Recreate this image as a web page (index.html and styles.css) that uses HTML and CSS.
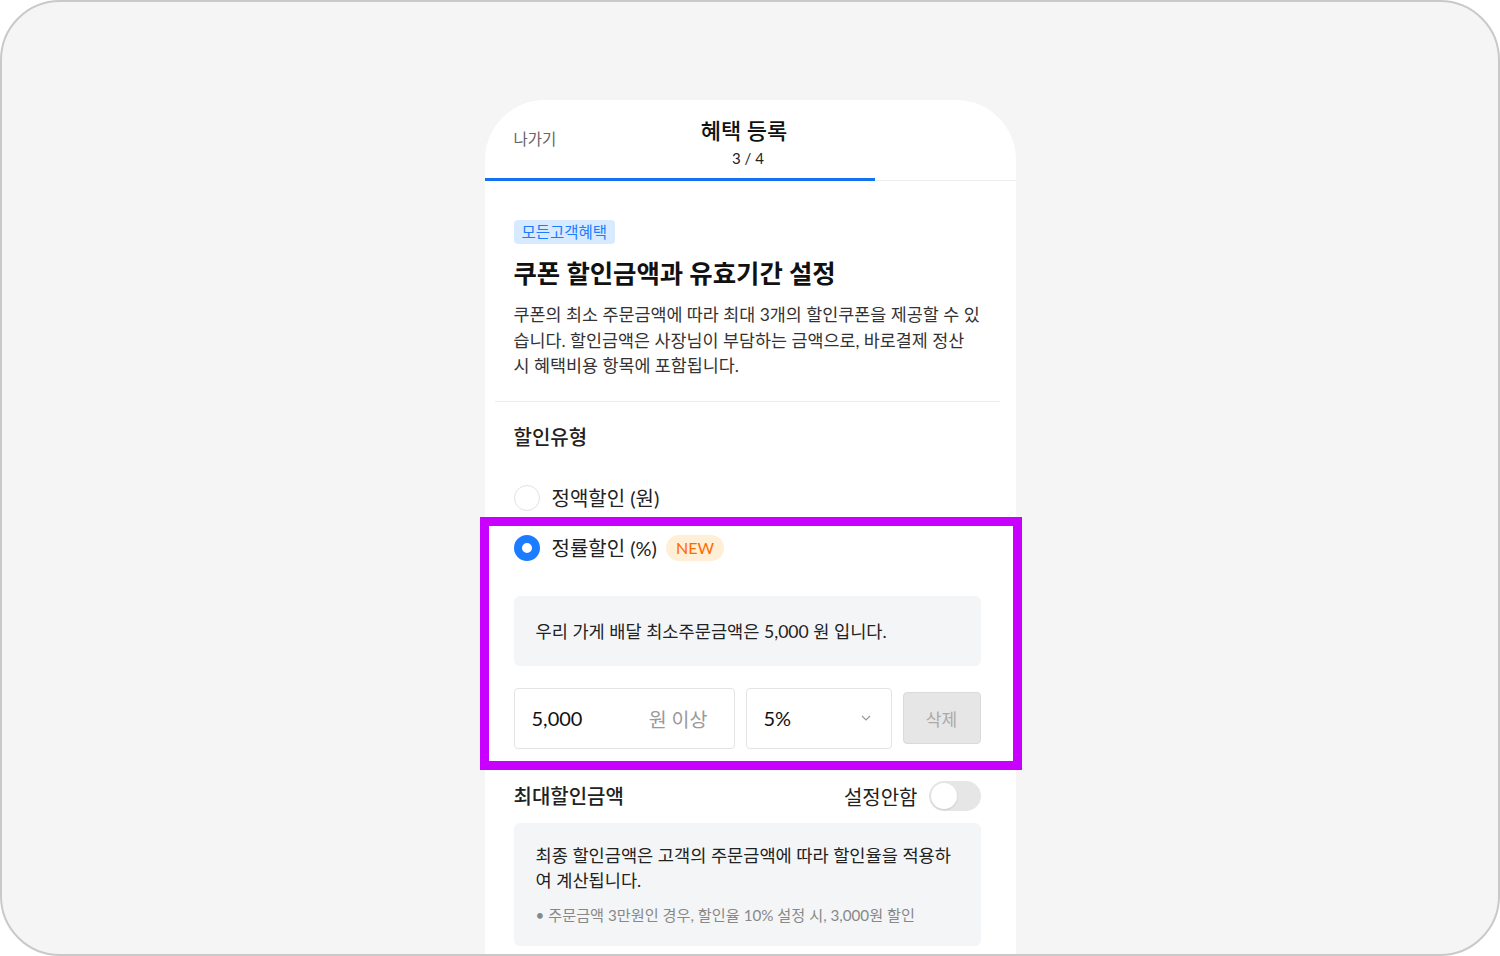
FILE: index.html
```html
<!DOCTYPE html>
<html lang="ko">
<head>
    <meta charset="utf-8">
    <title>혜택 등록</title>
    <link rel="stylesheet" href="styles.css">
</head>
<body>
    <div class="frame">
        <div class="phone">
            <div class="header">
                <div class="back">나가기</div>
                <div class="title-block">
                    <div class="title">혜택 등록</div>
                    <div class="step">3 / 4</div>
                </div>
                <div></div>
            </div>
            <div class="progress"><div class="progress-fill"></div></div>

            <div class="content">
                <span class="badge">모든고객혜택</span>
                <h1>쿠폰 할인금액과 유효기간 설정</h1>
                <p class="desc">쿠폰의 최소 주문금액에 따라 최대 3개의 할인쿠폰을 제공할 수 있<br>습니다. 할인금액은 사장님이 부담하는 금액으로, 바로결제 정산<br>시 혜택비용 항목에 포함됩니다.</p>

                <div class="divider"></div>

                <h2 class="section-title">할인유형</h2>

                <div class="radio-row first">
                    <span class="radio"></span>
                    <span class="radio-label">정액할인 (원)</span>
                </div>
                <div class="radio-row">
                    <span class="radio checked"></span>
                    <span class="radio-label">정률할인 (%)</span>
                    <span class="new">NEW</span>
                </div>

                <div class="info-box single">우리 가게 배달 최소주문금액은 5,000 원 입니다.</div>

                <div class="input-row">
                    <div class="field amount">
                        <span class="value">5,000</span>
                        <span class="unit">원 이상</span>
                    </div>
                    <div class="field select">
                        <span class="value">5%</span>
                        <svg width="10" height="6" viewBox="0 0 10 6"><path d="M1 1l4 4 4-4" fill="none" stroke="#999" stroke-width="1.2"/></svg>
                    </div>
                    <button class="btn-delete">삭제</button>
                </div>

                <div class="max-row">
                    <h2 class="section-title">최대할인금액</h2>
                    <div class="toggle-wrap">
                        <span class="toggle-label">설정안함</span>
                        <span class="toggle"><span class="knob"></span></span>
                    </div>
                </div>

                <div class="info-box multi">
                    <p>최종 할인금액은 고객의 주문금액에 따라 할인율을 적용하<br>여 계산됩니다.</p>
                    <p class="note">• 주문금액 3만원인 경우, 할인율 10% 설정 시, 3,000원 할인</p>
                </div>
            </div>
        </div>

        <div class="highlight"></div>
    </div>
</body>
</html>
```

FILE: styles.css
```css
* {
    margin: 0;
    padding: 0;
    box-sizing: border-box;
}

body {
    font-family: "Lato", "Noto Sans CJK KR", sans-serif;
    color: #222;
    background: #fff;
}

.frame {
    position: relative;
    width: 1500px;
    height: 956px;
    background: #f5f5f5;
    border: 2px solid #c9c9c9;
    border-radius: 60px;
    overflow: hidden;
    display: flex;
    justify-content: center;
    padding-top: 98px;
}

.phone {
    width: 531px;
    height: 900px;
    background: white;
    border-radius: 60px 60px 0 0;
}

.header {
    height: 78px;
    display: grid;
    grid-template-columns: 1fr auto 1fr;
    padding: 0 29px 0 29px;
}

.back {
    align-self: center;
    font-size: 15.5px;
    color: #666;
    margin-top: -3px;
}

.title-block {
    text-align: center;
    padding-top: 17px;
    margin-left: -4px;
}

.title {
    font-size: 22px;
    font-weight: 500;
    line-height: 28px;
    color: #111;
    margin-right: 8px;
}

.step {
    font-size: 15px;
    line-height: 18px;
    margin-top: 4px;
    color: #222;
}

.progress {
    height: 3px;
    border-bottom: 1px solid #eee;
}

.progress-fill {
    width: 390px;
    height: 3px;
    background: #1272f0;
}

.content {
    padding: 39px 35px 0 29px;
}

.badge {
    display: inline-block;
    height: 24px;
    line-height: 24px;
    padding: 0 8px;
    font-size: 15.5px;
    color: #1b7cff;
    background: #d8eaff;
    border-radius: 4px;
}

h1 {
    margin-top: 12px;
    font-size: 25.4px;
    font-weight: 700;
    line-height: 34px;
    color: #111;
}

.desc {
    margin-top: 12px;
    font-size: 17.4px;
    line-height: 25.5px;
    color: #333;
    white-space: nowrap;
}

.divider {
    height: 1px;
    background: #ececec;
    margin: 22px -19px 0 -19px;
}

.section-title {
    margin-top: 22px;
    font-size: 20px;
    font-weight: 500;
    line-height: 26px;
    color: #222;
}

.radio-row {
    display: flex;
    align-items: center;
    height: 30px;
    margin-top: 20px;
}

.radio-row.first {
    margin-top: 33px;
}

.radio {
    width: 26px;
    height: 26px;
    border-radius: 50%;
    border: 1.5px solid #e2e2e2;
    background: white;
    margin-right: 12px;
}

.radio.checked {
    border: 8px solid #1b7cff;
}

.radio-label {
    font-size: 20px;
    color: #222;
}

.new {
    margin-left: 9px;
    height: 26px;
    line-height: 26px;
    padding: 0 10px;
    border-radius: 13px;
    background: #ffefd6;
    color: #ff6a00;
    font-size: 16px;
}

.info-box {
    background: #f4f5f7;
    border-radius: 6px;
    padding: 0 22px;
    font-size: 17.6px;
    color: #222;
}

.info-box.single {
    margin-top: 33px;
    height: 70px;
    display: flex;
    align-items: center;
}

.input-row {
    margin-top: 22px;
    display: flex;
    align-items: center;
    gap: 11px;
    height: 61px;
}

.field {
    height: 61px;
    border: 1px solid #e4e4e4;
    border-radius: 4px;
    display: flex;
    align-items: center;
    justify-content: space-between;
    padding: 0 26px 0 17px;
}

.field .value {
    font-size: 20px;
    color: #111;
}

.field.amount {
    width: 221px;
}

.field .unit {
    font-size: 19.5px;
    color: #999;
}

.field.select {
    width: 146px;
    padding-right: 20px;
}

.btn-delete {
    width: 78px;
    height: 52px;
    border: 1px solid #dadada;
    border-radius: 4px;
    background: #e6e6e6;
    color: #aaa;
    font-family: inherit;
    font-size: 17px;
}

.max-row {
    margin-top: 32px;
    height: 31px;
    display: flex;
    align-items: center;
    justify-content: space-between;
}

.max-row .section-title {
    margin-top: 0;
}

.toggle-wrap {
    display: flex;
    align-items: center;
    gap: 11px;
}

.toggle-label {
    font-size: 20px;
    color: #222;
}

.toggle {
    width: 52px;
    height: 30px;
    border-radius: 15px;
    background: #e6e6e6;
    padding: 2px;
    display: flex;
}

.knob {
    width: 26px;
    height: 26px;
    border-radius: 50%;
    background: white;
    box-shadow: 0 1px 2px rgba(0, 0, 0, 0.12);
}

.info-box.multi {
    margin-top: 11px;
    padding-top: 20px;
    padding-bottom: 21px;
}

.info-box.multi p {
    line-height: 25px;
}

.info-box .note {
    margin-top: 12px;
    font-size: 15.2px;
    line-height: 20px !important;
    color: #888;
}

.highlight {
    position: absolute;
    left: 478px;
    top: 515px;
    width: 542px;
    height: 253px;
    border: 9px solid #c800ff;
}
```
